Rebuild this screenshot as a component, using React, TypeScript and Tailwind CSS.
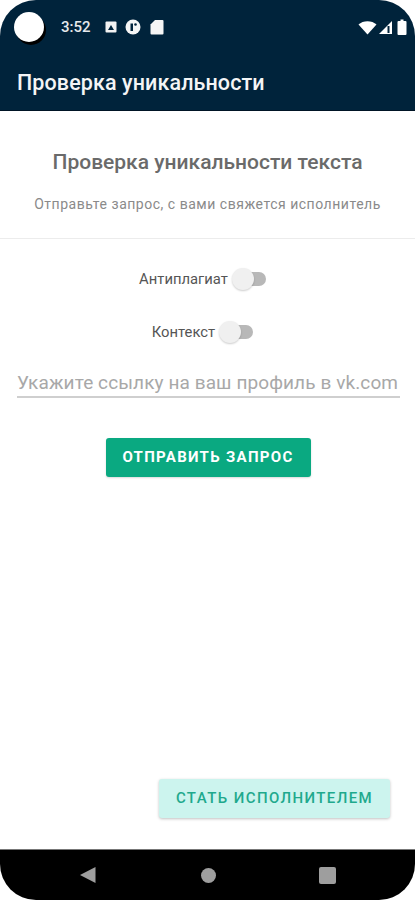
export default function App() {
  return (
    <div className="w-[415px] h-[900px] flex flex-col bg-white overflow-hidden font-['Roboto',sans-serif]">
      {/* status bar + toolbar */}
      <div className="h-[111px] shrink-0 bg-[#00233b] rounded-t-[36px] border-b border-[#001425]">
        <div className="h-[48px] pl-[14px] pr-[8px] pt-[6px] flex items-center">
          <div className="w-[30px] h-[30px] rounded-full bg-white shadow-[2px_3px_0_#000]"></div>
          <span className="ml-[17px] text-[15px] font-medium leading-none text-[#e6e9ec]">3:52</span>
          <svg className="ml-[14px]" width="12" height="12" viewBox="0 0 12 12">
            <rect x="0.5" y="0.5" width="11" height="11" rx="1" fill="#f2f2f2" />
            <path d="M3 9 L6 4 L9 9 Z" fill="#00233b" />
          </svg>
          <svg className="ml-[8px]" width="16" height="16" viewBox="0 0 16 16">
            <circle cx="8" cy="8" r="7.5" fill="#f5f5f5" />
            <path d="M5.5 4.5h2.5v7.5h-2.5z" fill="#00233b" />
            <circle cx="10.5" cy="5.5" r="1.3" fill="#00233b" />
          </svg>
          <svg className="ml-[9px]" width="14" height="16" viewBox="0 0 14 16">
            <path d="M5 1h7.5a1 1 0 0 1 1 1v12.5a1 1 0 0 1-1 1h-11a1 1 0 0 1-1-1V5.5z" fill="#f5f5f5" />
          </svg>
          <div className="ml-auto flex items-center gap-[1px]">
            <svg width="19" height="15" viewBox="0 0 19 15">
              <path d="M0.5 4.5C5 0 14 0 18.5 4.5L9.5 14.5Z" fill="#ffffff" />
            </svg>
            <svg width="15" height="15" viewBox="0 0 15 15">
              <path d="M14 1v13H1Z" fill="#ffffff" />
              <path d="M9.5 6h2v7h-2z" fill="#00233b" />
            </svg>
            <svg className="ml-[3px]" width="10" height="16" viewBox="0 0 10 16">
              <path d="M3.5 0.5h3v1.5h2a1 1 0 0 1 1 1v12a1 1 0 0 1-1 1h-7a1 1 0 0 1-1-1V3a1 1 0 0 1 1-1h2z" fill="#ffffff" />
            </svg>
          </div>
        </div>
        <div className="h-[62px] pl-[17px] flex items-center pt-[8px]">
          <h1 className="text-[21.5px] font-medium text-[#f4f5f6] tracking-[0.1px]">Проверка уникальности</h1>
        </div>
      </div>

      {/* content */}
      <div className="flex-1 flex flex-col min-h-0">
        <div className="h-[128px] shrink-0 border-b border-[#ececec] flex flex-col items-center">
          <h2 className="mt-[38px] text-[21px] leading-[26px] font-medium text-[#6a6a6a]">Проверка уникальности текста</h2>
          <p className="mt-[19px] text-[14px] leading-[20px] tracking-[0.52px] text-[#8a8a8a]">Отправьте запрос, с вами свяжется исполнитель</p>
        </div>

        <div className="mt-[28px] pr-[10px] h-[24px] flex items-center justify-center gap-[4px]">
          <span className="text-[14.8px] text-[#555555]">Антиплагиат</span>
          <Toggle />
        </div>
        <div className="mt-[29px] pr-[10px] h-[24px] flex items-center justify-center gap-[4px]">
          <span className="text-[14.8px] text-[#555555]">Контекст</span>
          <Toggle />
        </div>

        <div className="mt-[19px] ml-[17px] mr-[15px] border-b-2 border-[#cfcfcf] h-[35px] flex items-end pb-[1px]">
          <span className="text-[19px] leading-[24px] tracking-[0.1px] whitespace-nowrap text-[#a8a8a8]">Укажите ссылку на ваш профиль в vk.com</span>
        </div>

        <div className="mt-[40px] flex justify-center">
          <button className="w-[205px] h-[39px] ml-[1px] rounded-[3px] bg-[#0aa981] text-white text-[15px] font-bold tracking-[1.3px] shadow-[0_1px_2px_rgba(0,0,0,0.15)]">ОТПРАВИТЬ ЗАПРОС</button>
        </div>

        <div className="mt-auto mb-[31px] mr-[25px] flex justify-end">
          <button className="w-[231px] h-[39px] rounded-[3px] bg-[#ccf4ee] text-[#1fa98d] text-[15px] font-medium tracking-[1.4px] shadow-[0_1px_3px_rgba(0,0,0,0.25)]">СТАТЬ ИСПОЛНИТЕЛЕМ</button>
        </div>
      </div>

      {/* navigation bar */}
      <div className="h-[51px] shrink-0 bg-black rounded-b-[36px] border-t border-[#777777] flex items-center">
        <div className="w-[415px] flex justify-between pl-[79px] pr-[79px] items-center">
          <svg width="17" height="18" viewBox="0 0 17 18">
            <path d="M16.5 1v16L1 9Z" fill="#9e9e9e" />
          </svg>
          <div className="w-[15px] h-[15px] rounded-full bg-[#9e9e9e] ml-[2px]"></div>
          <div className="w-[17px] h-[17px] rounded-[2px] bg-[#9e9e9e]"></div>
        </div>
      </div>
    </div>
  );
}

function Toggle() {
  return (
    <div className="relative w-[34px] h-[22px]">
      <div className="absolute right-0 top-[4px] w-[28px] h-[14px] rounded-full bg-[#b8b8b8]"></div>
      <div className="absolute left-0 top-0 w-[22px] h-[22px] rounded-full bg-[#f0f0f0] shadow-[0_1px_2px_rgba(0,0,0,0.2)]"></div>
    </div>
  );
}
